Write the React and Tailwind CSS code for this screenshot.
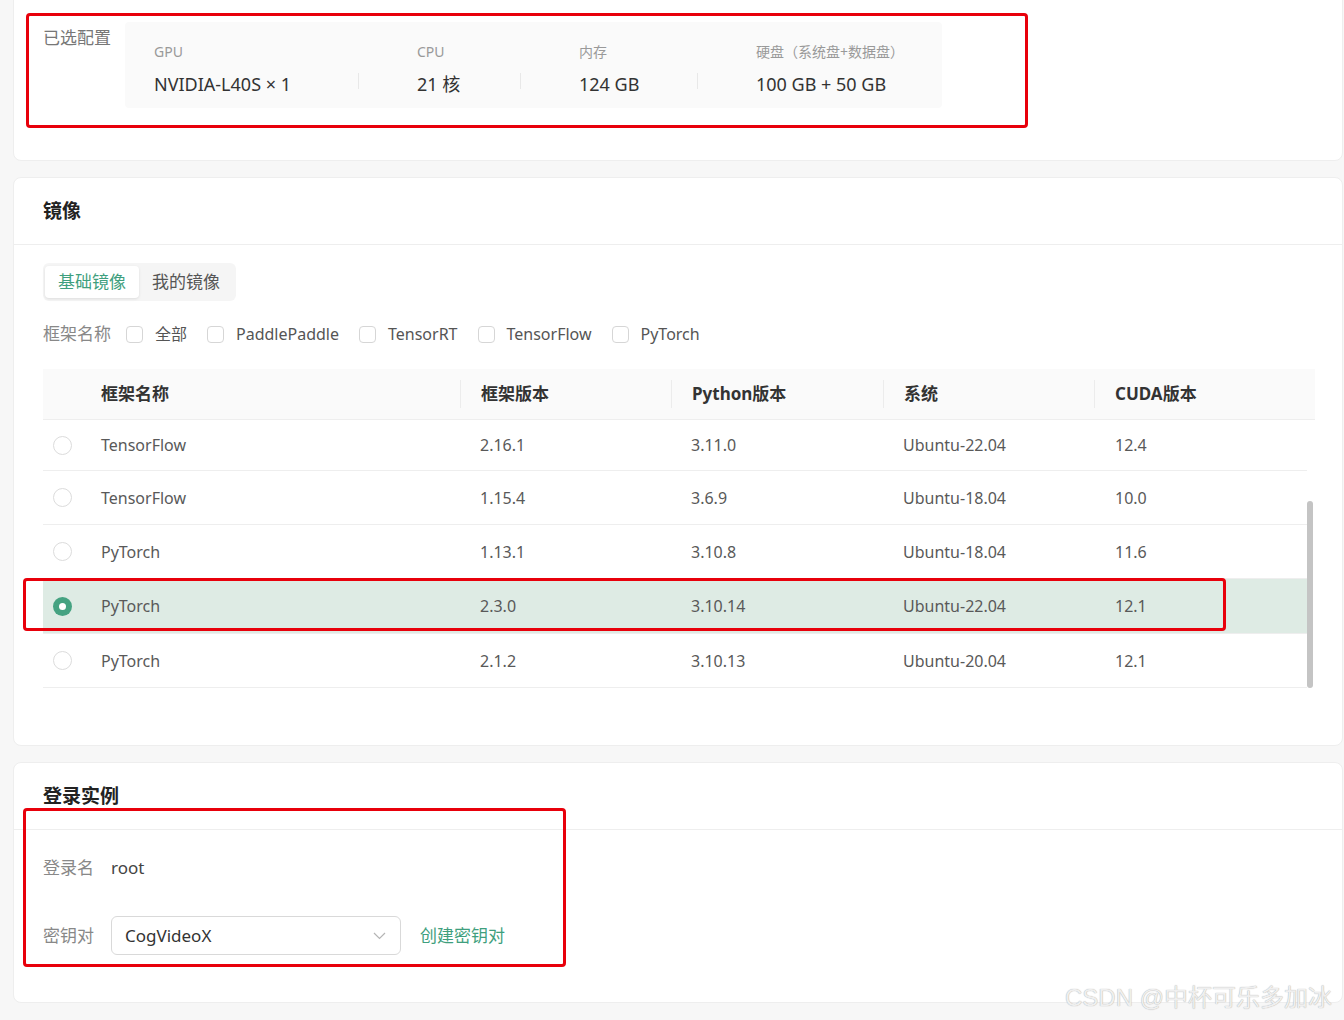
import React from 'react';

const rows = [
  { name: 'TensorFlow', ver: '2.16.1', py: '3.11.0', os: 'Ubuntu-22.04', cuda: '12.4', h: 'h-[51px]' },
  { name: 'TensorFlow', ver: '1.15.4', py: '3.6.9', os: 'Ubuntu-18.04', cuda: '10.0', h: 'h-[54px]' },
  { name: 'PyTorch', ver: '1.13.1', py: '3.10.8', os: 'Ubuntu-18.04', cuda: '11.6', h: 'h-[54px]' },
  { name: 'PyTorch', ver: '2.3.0', py: '3.10.14', os: 'Ubuntu-22.04', cuda: '12.1', h: 'h-[55px]', selected: true },
  { name: 'PyTorch', ver: '2.1.2', py: '3.10.13', os: 'Ubuntu-20.04', cuda: '12.1', h: 'h-[54px]' },
];

const filters = ['全部', 'PaddlePaddle', 'TensorRT', 'TensorFlow', 'PyTorch'];

const Divider = () => <div className="w-px h-[16px] bg-[#e8e8e8] ml-[30px] mr-[58px] mt-[31px]" />;

const HeadCell = ({ w, children }) => (
  <div className={`${w} flex items-center`}>
    <div className="w-px h-[28px] bg-[#ececec]" />
    <span className="ml-[20px]">{children}</span>
  </div>
);

export default function App() {
  return (
    <div className="relative min-h-[1020px] overflow-hidden bg-[#f7f7f7] pb-[17px] font-['Noto_Sans','Noto_Sans_CJK_SC',sans-serif]">
      {/* 已选配置 */}
      <div className="ml-[13px] mr-px -mt-[8px] flex bg-white border border-[#eeeeee] rounded-lg pt-[29px] pb-[52px] pl-[29px]">
        <div className="w-[82px] mt-[5px] text-[17px] leading-[22px] text-[#777]">已选配置</div>
        <div className="flex bg-[#fafafa] rounded pl-[29px] pr-[33px] pt-[20px] pb-[11px]">
          <div className="w-[174px]">
            <div className="text-[14px] leading-[20px] text-[#999]">GPU</div>
            <div className="mt-[9px] text-[18px] leading-[26px] text-[#333] whitespace-nowrap">NVIDIA-L40S × 1</div>
          </div>
          <Divider />
          <div className="w-[73px]">
            <div className="text-[14px] leading-[20px] text-[#999]">CPU</div>
            <div className="mt-[9px] text-[18px] leading-[26px] text-[#333]">21 核</div>
          </div>
          <Divider />
          <div className="w-[88px]">
            <div className="text-[14px] leading-[20px] text-[#999]">内存</div>
            <div className="mt-[9px] text-[18px] leading-[26px] text-[#333]">124 GB</div>
          </div>
          <Divider />
          <div className="w-[153px]">
            <div className="text-[14px] leading-[20px] text-[#999] whitespace-nowrap">硬盘（系统盘+数据盘）</div>
            <div className="mt-[9px] text-[18px] leading-[26px] text-[#333] whitespace-nowrap">100 GB + 50 GB</div>
          </div>
        </div>
      </div>

      {/* 镜像 */}
      <div className="ml-[13px] mr-px mt-[16px] bg-white border border-[#eeeeee] rounded-lg">
        <div className="h-[67px] flex items-center px-[29px] border-b border-[#eeeeee] text-[19px] font-bold text-[#222]">镜像</div>
        <div className="pl-[29px] pr-[27px] pt-[18px] pb-[57px]">
          <div className="inline-flex bg-[#f5f5f5] rounded-md p-[3px] pl-[2px]">
            <div className="h-[32px] px-[13px] flex items-center bg-white rounded shadow-[0_1px_3px_rgba(0,0,0,0.1)] text-[17px] text-[#3f9f7e]">基础镜像</div>
            <div className="h-[32px] px-[13px] flex items-center text-[17px] text-[#555]">我的镜像</div>
          </div>

          <div className="mt-[21px] h-[24px] flex items-center text-[16px] text-[#555]">
            <span className="text-[#888] text-[17px] mr-[15px]">框架名称</span>
            {filters.map(f => (
              <label key={f} className="flex items-center mr-[20px]">
                <span className="w-[17px] h-[17px] border border-[#d6d6d6] rounded-[4px] bg-white" />
                <span className="ml-[12px]">{f}</span>
              </label>
            ))}
          </div>

          <div className="mt-[23px]">
            <div className="h-[51px] flex bg-[#fafafa] border-b border-[#eeeeee] text-[17px] font-bold text-[#333]">
              <div className="w-[38px]" />
              <div className="w-[379px] flex items-center pl-[20px]">框架名称</div>
              <HeadCell w="w-[211px]">框架版本</HeadCell>
              <HeadCell w="w-[212px]">Python版本</HeadCell>
              <HeadCell w="w-[211px]">系统</HeadCell>
              <HeadCell w="flex-1">CUDA版本</HeadCell>
            </div>
            <div className="flex">
              <div className="w-[1264px]">
                {rows.map((r, i) => (
                  <div key={i} className={`${r.h} flex items-center border-b border-[#eeeeee] text-[16px] text-[#595959] ${r.selected ? 'bg-[#deebe4]' : ''}`}>
                    <div className="w-[38px] flex justify-center">
                      {r.selected ? (
                        <span className="w-[19px] h-[19px] rounded-full bg-[#45a281] flex items-center justify-center">
                          <span className="w-[7px] h-[7px] rounded-full bg-white" />
                        </span>
                      ) : (
                        <span className="w-[19px] h-[19px] rounded-full border border-[#dcdcdc] bg-white" />
                      )}
                    </div>
                    <div className="w-[379px] pl-[20px]">{r.name}</div>
                    <div className="w-[211px] pl-[20px]">{r.ver}</div>
                    <div className="w-[212px] pl-[20px]">{r.py}</div>
                    <div className="w-[211px] pl-[20px]">{r.os}</div>
                    <div className="flex-1 pl-[21px]">{r.cuda}</div>
                  </div>
                ))}
              </div>
              <div className="w-[8px] flex flex-col justify-end">
                <div className="w-[6px] h-[187px] rounded-full bg-[#c4c4c4]" />
              </div>
            </div>
          </div>
        </div>
      </div>

      {/* 登录实例 */}
      <div className="ml-[13px] mr-px mt-[16px] bg-white border border-[#eeeeee] rounded-lg">
        <div className="h-[67px] flex items-center px-[29px] border-b border-[#eeeeee] text-[19px] font-bold text-[#222]">登录实例</div>
        <div className="pl-[29px] pt-[26px] pb-[47px] text-[17px]">
          <div className="h-[24px] flex items-center">
            <span className="w-[68px] text-[#888]">登录名</span>
            <span className="text-[#444]">root</span>
          </div>
          <div className="mt-[36px] flex items-center">
            <span className="w-[68px] text-[#888]">密钥对</span>
            <div className="w-[290px] h-[39px] flex items-center justify-between pl-[13px] pr-[14px] border border-[#d9d9d9] rounded-md text-[#333]">
              <span>CogVideoX</span>
              <svg width="13" height="8" viewBox="0 0 13 8" fill="none" stroke="#b5b5b5" strokeWidth="1.2">
                <path d="M1 1l5.5 5.5L12 1" />
              </svg>
            </div>
            <span className="ml-[19px] text-[#3f9f7e]">创建密钥对</span>
          </div>
        </div>
      </div>

      {/* annotations */}
      <div className="pointer-events-none absolute left-[26px] top-[13px] w-[1002px] h-[115px] border-[3px] border-[#e8000b] rounded-sm" />
      <div className="pointer-events-none absolute left-[23px] top-[578px] w-[1203px] h-[53px] border-[3px] border-[#e8000b] rounded-sm" />
      <div className="pointer-events-none absolute left-[23px] top-[808px] w-[543px] h-[159px] border-[3px] border-[#e8000b] rounded-sm" />

      <div className="pointer-events-none absolute left-[1065px] top-[983px] text-[24px] leading-[30px] whitespace-nowrap text-[#efefef] [text-shadow:0_0_1px_#9a9a9a] font-['Liberation_Sans','Noto_Sans_CJK_SC',sans-serif]">
        CSDN @中杯可乐多加冰
      </div>
    </div>
  );
}
